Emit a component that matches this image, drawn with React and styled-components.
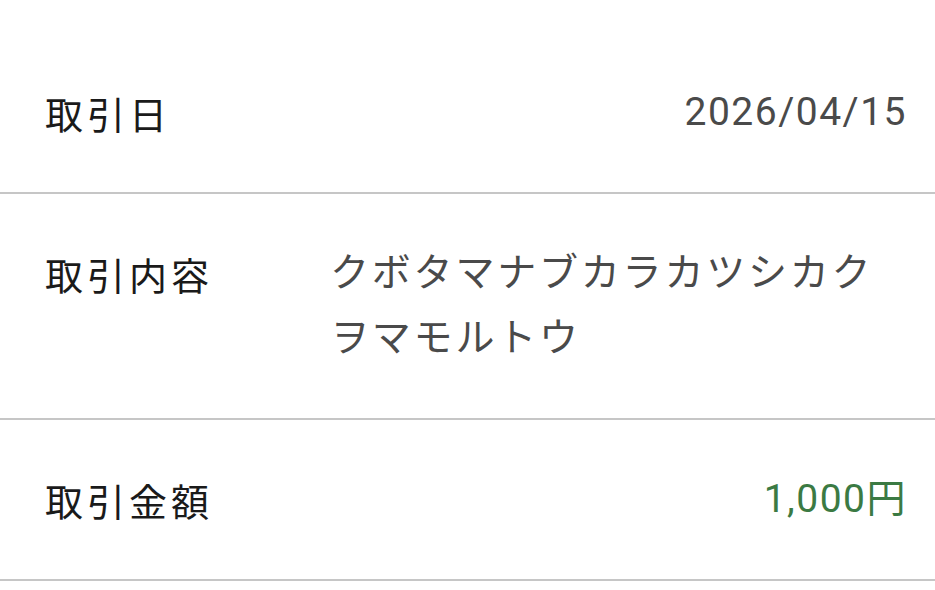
import React from 'react';
import styled, { createGlobalStyle } from 'styled-components';

const GlobalStyle = createGlobalStyle`
	html, body {
		margin: 0;
		padding: 0;
		background: #ffffff;
	}
	body {
		font-family: Roboto, 'Noto Sans CJK JP', sans-serif;
	}
`;

const rows = [
	{ label: '取引日', value: '2026/04/15', align: 'right' },
	{
		label: '取引内容',
		value: 'クボタマナブカラカツシカクヲマモルトウ',
		align: 'left',
		kana: true,
	},
	{ label: '取引金額', value: '1,000円', align: 'right', tone: 'money' },
];

const tones = {
	plain: '#4a4a4a',
	money: '#3b7a43',
};

function DetailList() {
	return (
		<List>
			{rows.map((row) => (
				<Row key={row.label}>
					<Label>{row.label}</Label>
					<Value
						$align={row.align}
						$tone={row.tone || 'plain'}
						$kana={row.kana}
					>
						{row.value}
					</Value>
				</Row>
			))}
		</List>
	);
}

export default function App() {
	return (
		<>
			<GlobalStyle />
			<DetailList />
		</>
	);
}

const List = styled.div`
	width: 935px;
	padding-top: 33px;
	display: flex;
	flex-direction: column;
`;

const Row = styled.div`
	display: flex;
	align-items: flex-start;
	padding: 47px 28px 47px 45px;
	border-bottom: 2px solid #c6c6c6;
	line-height: 65px;
`;

const Label = styled.div`
	flex: 0 0 285px;
	font-family: 'Noto Sans CJK JP', sans-serif;
	font-size: 38px;
	color: #1a1a1a;
	letter-spacing: 4px;
`;

const Value = styled.div`
	flex: 1;
	text-align: ${(p) => p.$align};
	font-family: Roboto, 'Noto Sans CJK JP', sans-serif;
	font-size: 39px;
	color: ${(p) => tones[p.$tone]};
	letter-spacing: ${(p) => (p.$kana ? '2.8px' : '1.5px')};
`;
